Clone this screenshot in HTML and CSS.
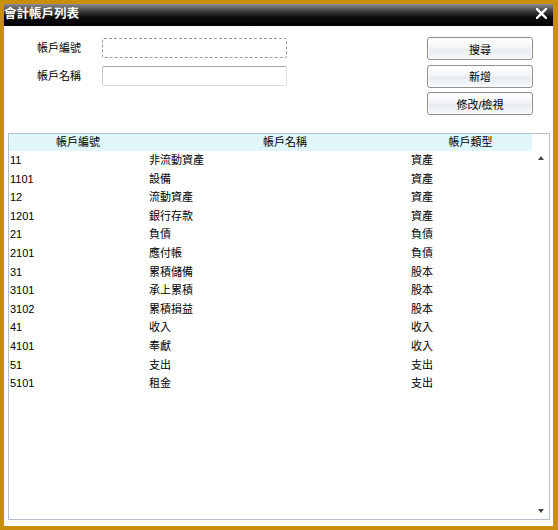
FILE: index.html
```html
<!DOCTYPE html>
<html lang="zh-Hant">
<head>
<meta charset="utf-8">
<title>會計帳戶列表</title>
<link rel="stylesheet" href="styles.css">
</head>
<body>
<div class="window">
  <div class="titlebar">
    <span class="title">會計帳戶列表</span>
    <svg class="close" width="11" height="11" viewBox="0 0 11 11"><path d="M1 1 L10 10 M10 1 L1 10" stroke="#fff" stroke-width="2.4" stroke-linecap="square"/></svg>
  </div>
  <div class="content">
    <div class="top">
      <div class="fields">
        <label class="lbl">帳戶編號</label>
        <div class="input focus"></div>
        <label class="lbl">帳戶名稱</label>
        <div class="input"></div>
      </div>
      <div class="buttons">
        <button class="btn">搜尋</button>
        <button class="btn">新增</button>
        <button class="btn">修改/檢視</button>
      </div>
    </div>
    <div class="grid">
      <div class="main">
        <div class="head">
          <div>帳戶編號</div>
          <div>帳戶名稱</div>
          <div>帳戶類型</div>
        </div>
        <div class="rows">
          <div class="row"><span>11</span><span>非流動資產</span><span>資產</span></div>
          <div class="row"><span>1101</span><span>設備</span><span>資產</span></div>
          <div class="row"><span>12</span><span>流動資產</span><span>資產</span></div>
          <div class="row"><span>1201</span><span>銀行存款</span><span>資產</span></div>
          <div class="row"><span>21</span><span>負債</span><span>負債</span></div>
          <div class="row"><span>2101</span><span>應付帳</span><span>負債</span></div>
          <div class="row"><span>31</span><span>累積儲備</span><span>股本</span></div>
          <div class="row"><span>3101</span><span>承上累積</span><span>股本</span></div>
          <div class="row"><span>3102</span><span>累積損益</span><span>股本</span></div>
          <div class="row"><span>41</span><span>收入</span><span>收入</span></div>
          <div class="row"><span>4101</span><span>奉獻</span><span>收入</span></div>
          <div class="row"><span>51</span><span>支出</span><span>支出</span></div>
          <div class="row"><span>5101</span><span>租金</span><span>支出</span></div>
        </div>
      </div>
      <div class="scroll">
        <span class="arrow up"></span>
        <span class="arrow down"></span>
      </div>
    </div>
  </div>
</div>
</body>
</html>
```

FILE: styles.css
```css
html, body {
  margin: 0;
  padding: 0;
  background: #c98f0c;
}
body {
  font-family: "Liberation Sans", "Noto Sans CJK TC", sans-serif;
  font-size: 11px;
  color: #000;
}
.window {
  width: 558px;
  height: 530px;
  box-sizing: border-box;
  border-style: solid;
  border-color: #c98f0c;
  border-width: 4px 5px 4px 4px;
  display: flex;
  flex-direction: column;
  background: #fff;
}
.titlebar {
  height: 22px;
  flex: none;
  background: linear-gradient(#8c8c8c 0%, #3a3a3a 35%, #0c0c0c 60%, #000 100%);
  display: flex;
  align-items: center;
  justify-content: space-between;
  padding: 0 5px 0 0;
}
.title {
  color: #fff;
  font-weight: bold;
  font-size: 12.5px;
  font-family: "Noto Sans CJK TC", sans-serif;
  line-height: 22px;
  margin-top: -4px;
  letter-spacing: 0;
}
.close {
  display: block;
  margin-top: -3px;
  margin-right: 1px;
}
.content {
  flex: 1;
  display: flex;
  flex-direction: column;
  padding: 11px 3px 6px 4px;
  min-height: 0;
}
.top {
  display: flex;
  justify-content: space-between;
  align-items: flex-start;
}
.fields {
  margin-left: 29px;
  margin-top: 1px;
  display: grid;
  grid-template-columns: 65px 185px;
  row-gap: 8px;
  align-items: center;
}
.lbl {
  font-size: 11px;
  line-height: 20px;
}
.input {
  height: 20px;
  box-sizing: border-box;
  border: 1px solid #dde1e6;
  border-top-color: #a4a6ab;
  border-left-color: #c8cacf;
  border-radius: 2px;
  background: #fff;
}
.input.focus {
  border: 1px dashed #9a9a9a;
}
.buttons {
  margin-right: 17px;
  display: flex;
  flex-direction: column;
  gap: 4.5px;
  width: 106px;
}
.btn {
  height: 23px;
  margin: 0;
  padding: 0;
  font: inherit;
  font-size: 11px;
  color: #000;
  border: 1px solid #8e8f8f;
  border-radius: 3px;
  background: linear-gradient(#ffffff 0%, #f3f5f8 45%, #e7ecf1 55%, #f6f8fa 100%);
  box-shadow: inset 0 0 0 1px #fcfcfc;
}
.grid {
  margin-top: 18px;
  flex: 1;
  display: flex;
  border: 1px solid #b4c0cc;
  min-height: 0;
}
.main {
  flex: 1;
  display: flex;
  flex-direction: column;
}
.head {
  height: 17px;
  background: #e1f6fb;
  display: grid;
  grid-template-columns: 138px 276px 95px;
  line-height: 17px;
  text-align: center;
}
.rows {
  flex: 1;
}
.row {
  height: 18.6px;
  line-height: 18.6px;
  display: grid;
  grid-template-columns: 139px 262px 1fr;
}
.row span {
  padding-left: 1px;
  white-space: nowrap;
}
.scroll {
  width: 17px;
  flex: none;
  display: flex;
  flex-direction: column;
  justify-content: space-between;
  align-items: center;
  padding: 22px 0 6px;
}
.arrow {
  width: 0;
  height: 0;
  border-left: 3.5px solid transparent;
  border-right: 3.5px solid transparent;
}
.arrow.up {
  border-bottom: 4px solid #444;
}
.arrow.down {
  border-top: 4px solid #444;
}
```
